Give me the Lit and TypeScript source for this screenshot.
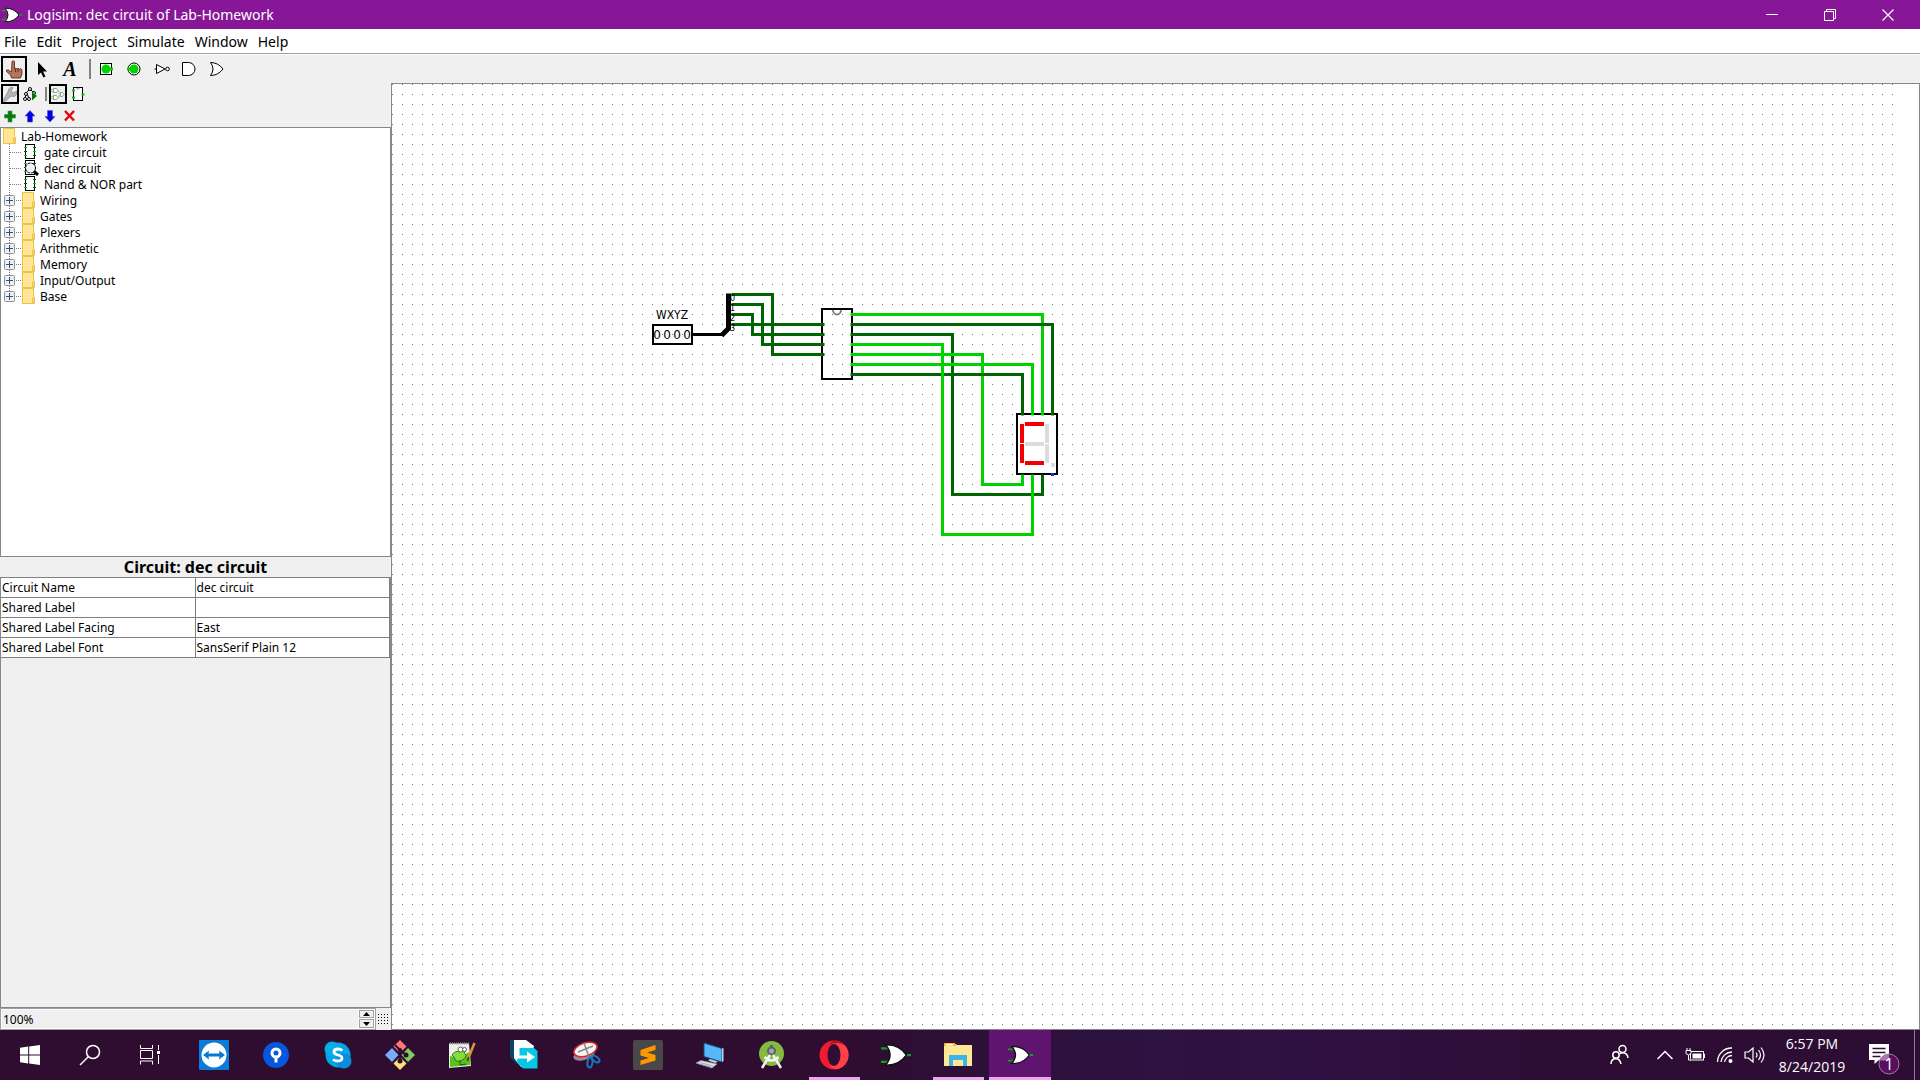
import { LitElement, html, svg, css, nothing } from "lit";
import type { TemplateResult } from "lit";
import { customElement } from "lit/decorators.js";
import { classMap } from "lit/directives/class-map.js";

const icon = (width: number, height: number, body: unknown) => html`<svg
  width=${width} height=${height} viewBox="0 0 ${width} ${height}" aria-hidden="true">${body}</svg>`;

/* ---------- toolbar icons, 24 x 24 ---------- */

const hand = icon(24, 24, svg`
  <path d="M10 4.500q1.500-1.500 2.500 0V12l1-.8 1.500.8 1-.8 1.500 1 1.500-.5 1 1.300V17l-1.500 4H9.500L8.500 18 4.500 14.500V13h2L9.500 15z" fill="#b9735a" stroke="#4a1f14" stroke-width=".8"/>
  <path d="M13.500 12v3M16 12v3" stroke="#4a1f14" stroke-width=".8" fill="none"/>`);
const arrow = icon(24, 24, svg`
  <path d="M8 5V18L11 15.500 13.500 20.500 15.500 19.500 13 14.500H17z" fill="#000"/>`);
const notGate = icon(24, 24, svg`
  <path d="M6.500 7.500V16.500L15 12z" fill="#fff" stroke="#000"/>
  <path d="M4.500 12H6" stroke="#000"/>
  <circle cx="17.500" cy="12" r="1.800" fill="#fff" stroke="#000"/>`);
const andGate = icon(24, 24, svg`
  <path d="M4.500 5.500H10.500a6.500 6.500 0 0 1 0 13H4.500z" fill="#fff" stroke="#000"/>`);
const orGate = icon(24, 24, svg`
  <path d="M4.500 5.500Q12 5.500 17 12 12 18.500 4.500 18.500 9.500 12 4.500 5.500z" fill="#fff" stroke="#000"/>`);
const inputPin = icon(24, 24, svg`
  <rect x="6.500" y="6.500" width="11" height="11" fill="#fff" stroke="#000"/>
  <circle cx="12" cy="12" r="4.500" fill="#00d200"/><path d="M15 12h4" stroke="#00d200" stroke-width="3"/>`);
const outputPin = icon(24, 24, svg`
  <circle cx="12" cy="12" r="6" fill="#fff" stroke="#000"/>
  <circle cx="12" cy="12" r="4.500" fill="#00d200"/><path d="M5 12h4" stroke="#00d200" stroke-width="3"/>`);

/* ---------- explorer icons, 16 x 16 ---------- */

const wrench = icon(16, 16, svg`
  <path d="M1 14.500 2.500 16 9 10q5 1.500 6-3l-.5-2-3 2-2.500-2 2-3.500Q6 1 6 6z" fill="#b4b4b4" stroke="#989898"/>`);
const simTree = icon(16, 16, svg`
  <g fill="#fff" stroke="#000"><path d="M8 3 4 7 3 14M8 3l5 5M5 7l2 6" fill="none"/>
  <circle cx="8" cy="3" r="1.500"/><circle cx="4" cy="8" r="1.500"/><circle cx="12" cy="7" r="1.500"/><circle cx="3" cy="13" r="1.500"/><circle cx="7" cy="13" r="1.500"/></g>
  <path d="M10 5.500v9L15 10z" fill="#087808"/>`);
const layoutView = icon(16, 16, svg`
  <g fill="#fff" stroke="#999"><path d="M3.500 2.500h3q3 2 0 4h-3zM3.500 9.500h3q3 2 0 4h-3zM10.500 6.500h2q3 2 0 4h-2z"/></g>
  <path d="M1 3.500h2M1 5.500h2M1 10.500h2M1 12.500h2M8 4.500h1v3h1M8 11.500h1V9.500h1M14 8.500h2" stroke="#86d486" fill="none"/>`);
const appearance = icon(16, 16, svg`
  <rect x="3.500" y="1.500" width="9" height="13" fill="#fff" stroke="#000"/>
  <path d="M6.500 2q1.500 3 3 0" fill="none" stroke="#888"/>
  <path d="M2 4.500h3M2 11.500h3M11.500 8.500h3" stroke="#00c800" stroke-width="2"/>`);
const plus = icon(16, 16, svg`
  <path d="M6 3h4v3.500H13.500v3.500H10V14H6v-4H2.500V6.500H6z" fill="#007c10" stroke="#3a9a42" stroke-width=".6"/>`);
const up = icon(16, 16, svg`
  <path d="M8 2.500 13 8H10.500v6h-5V8H3z" fill="#0000e0" stroke="#5555c8" stroke-width=".6"/>`);
const down = icon(16, 16, svg`
  <path d="M8 14 13 8.500H10.500v-6h-5v6H3z" fill="#0000e0" stroke="#5555c8" stroke-width=".6"/>`);
const cross = icon(16, 16, svg`
  <path d="M3 3 12 12.500M12 3 3 12.500" stroke="#e00808" stroke-width="2.500"/>`);

const folder = icon(14, 16, svg`
  <path d="M.5.5h11v9h1v6H.5z" fill="#ffe794" stroke="#e9c34d"/>
  <path d="M10.500 15V10h1.500v5" fill="#ffe794" stroke="#e9c34d"/>`);
const chip = svg`
  <rect x="3.500" y=".5" width="9" height="14" fill="#fff" stroke="#000"/>
  <path d="M2 3.500h3M2 11.500h3M11 7.500h3" stroke="#00d200"/>
  <path d="M2 7.500h3M11 3.500h3M11 11.500h3" stroke="#006400"/>`;
const circuit = icon(17, 16, chip);
const openCircuit = icon(17, 16, svg`${chip}
  <circle cx="8.500" cy="8" r="5" fill="#f0f0ff" stroke="#000" stroke-dasharray="3 1"/>
  <path d="M12 11.500 16 15" stroke="#000" stroke-width="3"/>`);

/* ---------- gate logo ---------- */

const gateLogo = (w: number, h: number) => html`<svg width=${w} height=${h} viewBox="0 0 20 16" aria-hidden="true">
  <path d="M0 3.500H5M0 12.500H5M15.500 8H20" stroke="#12a01c" stroke-width="1.500"/>
  <path d="M3 1.200Q12 .8 17 8 12 15.200 3 14.800 9 8 3 1.200z" fill="#fff" stroke="#111" stroke-width="1"/></svg>`;

/* ---------- taskbar icons, 30 x 30 ---------- */

const windowsLogo = icon(20, 20, svg`
  <path d="M0 2.800 8.200 1.600V9.500H0zM9.200 1.500 20 0v9.500H9.200zM0 10.500h8.200v8L0 17.300zM9.200 10.500H20V20L9.200 18.600z" fill="#fff"/>`);
const search = icon(22, 22, svg`
  <circle cx="14" cy="8" r="6.500" fill="none" stroke="#fff" stroke-width="1.500"/><path d="M9.500 12.500 1 21" stroke="#fff" stroke-width="1.500"/>`);
const taskView = icon(20, 20, svg`
  <path d="M.5 0v3.500h12V0M.5 19.500V16h12v3.500M.5 5.500h12v8H.5zM18.500 0v5M18.500 10v9" fill="none" stroke="#fff"/>
  <rect x="17" y="6" width="3" height="3" fill="#fff"/>`);
const teamViewer = icon(30, 30, svg`
  <rect width="30" height="30" rx="1" fill="#0b7bd8"/><circle cx="15" cy="15" r="12.500" fill="#fff"/>
  <path d="M4 15 10 10.500 9.500 13.500h11L20 10.500 26 15 20 19.500 20.500 16.500h-11L10 19.500z" fill="#0b78d0"/>`);
const sourceTree = icon(30, 30, svg`
  <circle cx="15" cy="15" r="13" fill="#0557e0"/>
  <circle cx="15" cy="13" r="4" fill="none" stroke="#fff" stroke-width="3"/><path d="M13.500 17h3v5.500h-3z" fill="#fff"/>`);
const skype = icon(30, 30, svg`
  <circle cx="15" cy="15" r="12.500" fill="#04a5e6"/><circle cx="9" cy="9" r="7.500" fill="#04ade8"/><circle cx="21" cy="21" r="7.500" fill="#088cdb"/>
  <path d="M19.500 10.500q-2-1.500-4.500-1.500-4 0-4 3 0 2 4 3t4 3q0 3-4.500 3-2.500 0-4.500-1.500" fill="none" stroke="#fff" stroke-width="2.800"/>`);
const git = icon(30, 30, svg`
  <path d="M15 0 21.500 6.500 15 13 8.500 6.500z" fill="#f87878"/><path d="M23 8 30 15 23 22 16.500 15z" fill="#80cc58"/>
  <path d="M15 17 21.500 23.500 15 30 8.500 23.500z" fill="#ffe070"/><path d="M7 8 13.500 15 7 22 0 15z" fill="#78acf8"/>
  <path d="M10 5 15 10v11M15 10l6 5" fill="none" stroke="#2e0d31" stroke-width="2"/>
  <circle cx="15" cy="10" r="2" fill="#2e0d31"/><circle cx="15" cy="21" r="2.500" fill="#2e0d31"/><circle cx="21" cy="15" r="2.500" fill="#2e0d31"/>`);
const notepad = icon(30, 30, svg`
  <path d="M2 3.500H22L24 26 2 28z" fill="#eef2ea"/><path d="M3 16q10 2 19-4l1.500 13L3 27z" fill="#55c41c"/>
  <path d="M3 3.500H22" stroke="#999" stroke-width="2" stroke-dasharray="1 1"/>
  <path d="M5 15q3-5 8-3 1-4 4-3t0 4q4 2 0 6-6 4-9 1 0-3-3-5z" fill="#83dd3a" stroke="#28501c" stroke-width=".8"/>
  <circle cx="13.500" cy="9.500" r="2.500" fill="#fff" stroke="#444" stroke-width=".8"/><circle cx="17.500" cy="9.500" r="2" fill="#fff" stroke="#444" stroke-width=".8"/>
  <path d="M13 21v4l6-1" fill="none" stroke="#28501c"/>
  <path d="M27.500 3 21 19" stroke="#e0962a" stroke-width="2.500"/><path d="M21.500 17 20.500 21" stroke="#553311" stroke-width="1.500"/>`);
const transfer = icon(30, 30, svg`
  <path d="M1 0H16L12 26 8 24 1 17z" fill="#0b4568"/><path d="M5 0H17L25 6 20 27H12L5 18z" fill="#fff"/>
  <path d="M10 8H25L28.500 11V28.500H14L8 22z" fill="#04c8e4"/><path d="M5 8V18H8V8z" fill="#fff"/>
  <path d="M9 8v9h11" fill="none" stroke="#fff" stroke-width="3"/><path d="M18 11.500 26 17 18 22.500z" fill="#fff"/>`);
const snip = icon(30, 30, svg`
  <ellipse cx="13" cy="15" rx="11" ry="5" transform="rotate(-16 13 15)" fill="#9a8a9c"/>
  <ellipse cx="14.500" cy="9.500" rx="12" ry="6.500" transform="rotate(-18 14.500 9.500)" fill="#f4f4f4" stroke="#d82830" stroke-width="1.500"/>
  <path d="M7 12 22 6M13 3 18 17" stroke="#888" stroke-width="1.500"/>
  <ellipse cx="19" cy="22.500" rx="2.500" ry="5" transform="rotate(8 19 22.500)" fill="none" stroke="#1878c4" stroke-width="2"/>
  <ellipse cx="24.500" cy="19" rx="2.500" ry="4.500" transform="rotate(-55 24.500 19)" fill="none" stroke="#1878c4" stroke-width="2"/>`);
const sublime = icon(30, 30, svg`
  <rect width="30" height="30" rx="2" fill="#484848"/>
  <path d="M22.500 5 7.500 10v5.500L16 18l-8.500 2.500V25l15-4.500V15L14 12.500 22.500 10z" fill="#ff9800"/>`);
const computer = icon(30, 30, svg`
  <path d="M9 3 27 8.500V22L9 16.500z" fill="#55b8fa" stroke="#1b4f83"/>
  <path d="M27 8.500V22l1.500-1V8z" fill="#c8d4dc"/>
  <path d="M6 20.500 22 24 17 28 1 23z" fill="#dfe3e8" stroke="#8893a0" stroke-width=".7"/><path d="M5 22.500 18 26M4 24 16 27" stroke="#8893a0" stroke-width=".7"/>
  <path d="M15 19 23 21.500 20 23 13 20.500z" fill="#c4ccd4"/>`);
const androidStudio = icon(30, 30, svg`
  <circle cx="14.500" cy="13.500" r="12.500" fill="#85ba3f"/>
  <circle cx="14.500" cy="11" r="3.500" fill="#a0a8a8" stroke="#5d6366" stroke-width="2"/><path d="M14.500 5v3" stroke="#5d6366" stroke-width="3"/>
  <path d="M13 15 5 28M16 15 24 28" stroke="#f4f4f4" stroke-width="2.500"/><path d="M7.500 17q7 7 14 0" fill="none" stroke="#f4f4f4" stroke-width="2.500"/>`);
const opera = icon(30, 30, svg`
  <ellipse cx="15" cy="15" rx="14.500" ry="14.500" fill="#ee1c2e"/><path d="M18 .8a14.500 14.500 0 0 1 0 28.400Q12 29 10 25q10 3 11-10Q20 2 10 5 13 1 18 .8z" fill="#ff4048"/>
  <path d="M10 5q2-4 8-4.200 5 1 8 5-6-5-16-.8z" fill="#b80d20"/>
  <ellipse cx="15" cy="15" rx="6.500" ry="11" fill="#300d34"/>`);
const explorer = icon(30, 26, svg`
  <path d="M1 1h10l3 2h15v21H1z" fill="#ffe793"/><path d="M1 1h10l2.500 3H1z" fill="#f5b52c"/><path d="M3 2h7v1.500H3z" fill="#fff"/>
  <path d="M6 24V13h18v11h-4v-6H10v6z" fill="#3db4e7"/>`);

/* ---------- tray icons ---------- */

const people = icon(20, 22, svg`
  <g fill="none" stroke="#fff" stroke-width="1.500"><circle cx="12.500" cy="5" r="3.500"/><circle cx="6" cy="11" r="3.200"/>
  <path d="M1 20q0-5 5-5.500 4 .5 5 5.500M9.500 10q2-1.500 4-1.200 4 .7 4.500 5.200"/></g>`);
const chevron = icon(18, 10, svg`<path d="M1.500 9 9 1.500 16.500 9" fill="none" stroke="#fff" stroke-width="1.500"/>`);
const battery = icon(20, 16, svg`
  <rect x="5.500" y="4.500" width="13" height="8.500" fill="none" stroke="#fff"/><path d="M18.500 7h1v4" stroke="#fff" fill="none"/>
  <path d="M7.500 6.500h9v5h-9z" fill="#fff"/><path d="M1 3.500h5v3L3.500 8 1 6.500zM3.500 8v5H6M2 1v3M5 1v3" stroke="#fff" fill="#2e0d31"/>`);
const wifi = icon(18, 18, svg`
  <g fill="none" stroke="#fff" stroke-width="1.300"><path d="M1.500 16A14 14 0 0 1 16 2M5 16A11 11 0 0 1 16 6M8.500 16A8 8 0 0 1 16 9.500"/></g>
  <circle cx="14.500" cy="15" r="2" fill="#fff"/>`);
const speaker = icon(22, 18, svg`
  <g fill="none" stroke="#fff" stroke-width="1.200"><path d="M1 6h3.500L9 2V16L4.500 12H1zM12 6.500q2 2.500 0 5M14.500 4q4 5 0 10M17 1.500q6 7.500 0 15"/></g>`);
const notification = icon(32, 40, svg`
  <path d="M0 9H20V25H10l-4.500 4V25H0z" fill="#fff"/><path d="M3.500 13.500h13M3.500 17.500h13M3.500 21.500h8" stroke="#2e0d31" stroke-width="1.500"/>
  <circle cx="20" cy="29" r="10" fill="#56105f" stroke="#a678ac"/>
  <path d="M10.500 25.500A10 10 0 0 1 20 19.500v6z" fill="#a678ac"/>`);

/* ---------- data ---------- */

type Node = { label: string; kind: "circuit" | "open" | "folder" };
const nodes: Node[] = [
  { label: "gate circuit", kind: "circuit" },
  { label: "dec circuit", kind: "open" },
  { label: "Nand & NOR part", kind: "circuit" },
  ...["Wiring", "Gates", "Plexers", "Arithmetic", "Memory", "Input/Output", "Base"].map(
    (label): Node => ({ label, kind: "folder" })),
];

const attributes: [string, string][] = [
  ["Circuit Name", "dec circuit"],
  ["Shared Label", ""],
  ["Shared Label Facing", "East"],
  ["Shared Label Font", "SansSerif Plain 12"],
];

type Tool = { name: string; icon: TemplateResult; selected?: boolean };

const pinned: { name: string; icon: TemplateResult; state?: string }[] = [
  { name: "TeamViewer", icon: teamViewer },
  { name: "Sourcetree", icon: sourceTree },
  { name: "Skype", icon: skype },
  { name: "Git Bash", icon: git },
  { name: "Notepad++", icon: notepad },
  { name: "File transfer", icon: transfer },
  { name: "Snipping Tool", icon: snip },
  { name: "Sublime Text", icon: sublime },
  { name: "Remote computer", icon: computer },
  { name: "Android Studio", icon: androidStudio },
  { name: "Opera", icon: opera, state: "running" },
  { name: "Logisim shortcut", icon: gateLogo(30, 24) },
  { name: "File Explorer", icon: explorer, state: "running" },
  { name: "Logisim", icon: gateLogo(25, 20), state: "active" },
];

/* Wires on the 10-unit grid; value 1 is bright green, 0 is dark green. */
const wires: { path: string; value: 0 | 1 }[] = [
  { path: "M731 294H772V354H824", value: 0 },
  { path: "M731 304H762V344H824", value: 0 },
  { path: "M731 314H752V334H824", value: 0 },
  { path: "M731 324H824", value: 0 },
  { path: "M850 334H952V494H1042V474", value: 0 },
  { path: "M850 354H982V484H1022V474", value: 1 },
  { path: "M850 364H1032V415", value: 1 },
  { path: "M850 374H1022V415", value: 0 },
  { path: "M850 344H942V534H1032V474", value: 1 },
  { path: "M850 314H1042V415", value: 1 },
  { path: "M850 324H1052V415", value: 0 },
];

const segments: [number, number, number, number, boolean][] = [
  [1025, 422, 19, 4, true],
  [1020, 424, 4, 19, true],
  [1020, 444, 4, 19, true],
  [1025, 461, 19, 4, true],
  [1025, 442, 19, 4, false],
  [1045, 424, 4, 19, false],
  [1045, 444, 4, 19, false],
  [1051, 463, 4, 4, false],
];

@customElement("circuit-canvas")
export class CircuitCanvas extends LitElement {
  static styles = css`
    :host { display: block; position: relative; overflow: hidden; background: #fff; }
    .grid {
      height: 100%;
      margin-right: 25px;
      background: conic-gradient(at 1px 1px, transparent 75%, #777 0) 0 0 / 10px 10px;
    }
    .drawing { position: absolute; left: 0; top: 0; }
    .label { font: 12px "DejaVu Sans Condensed", "Noto Sans", sans-serif; }
    .bit { font: 12px "DejaVu Sans", sans-serif; text-anchor: middle; }
    .fan { font: 8px "DejaVu Sans", sans-serif; }
  `;
  render() {
    return html`
      <div class="grid"></div>
      <svg class="drawing" width="700" height="480" viewBox="392 84 700 480" role="img" aria-label="dec circuit">
        <rect x="653" y="325" width="39" height="19" fill="none" stroke="#000" stroke-width="2" />
        <text class="label" x="656" y="319">WXYZ</text>
        ${[657, 667, 677, 687].map((x) => svg`<text class="bit" x=${x} y="339">0</text>`)}
        <rect x="822" y="309" width="30" height="70" fill="none" stroke="#000" stroke-width="2" />
        <path d="M833 310a4 4.500 0 0 0 8 0" fill="none" stroke="#808080" stroke-width="2" />
        <rect x="1017" y="414" width="40" height="60" fill="#fff" stroke="#000" stroke-width="2" />
        <g transform="translate(.5 .5)" fill="none" stroke-width="3">
          ${wires.map((w) => svg`<path d=${w.path} stroke=${w.value ? "#00d200" : "#006400"} />`)}
          <path d="M692 334H722" stroke="#000" />
          <path d="M721 335 728 328V293" stroke="#000" stroke-width="5" />
        </g>
        ${[0, 1, 2, 3].map((n) => svg`<text class="fan" x="730" y=${301 + n * 10}>${n}</text>`)}
        ${segments.map(([x, y, w, h, lit]) => svg`<rect x=${x} y=${y} width=${w} height=${h}
          fill=${lit ? "#f00000" : "#dcdcdc"} />`)}
        <rect x="1051" y="473" width="3" height="3" fill="#2020ff" />
      </svg>
    `;
  }
}

@customElement("app-root")
export class AppRoot extends LitElement {
  static styles = css`
    :host {
      display: flex;
      flex-direction: column;
      min-height: 100vh;
      background: #f0f0f0;
      color: #000;
      font: 12px/16px "Noto Sans", sans-serif;
    }
    *, *::before { box-sizing: border-box; }
    svg { display: block; flex: none; }
    button {
      display: flex;
      align-items: center;
      justify-content: center;
      margin: 0;
      padding: 0;
      border: 0;
      background: none;
      color: inherit;
      font: inherit;
    }
    ul { margin: 0; padding: 0; list-style: none; }

    .titlebar {
      display: flex;
      align-items: center;
      height: 29px;
      padding: 0 3px 0 2px;
      background: #881798;
      color: #fff;
      font: 14px/20px "Noto Sans", sans-serif;
    }
    .title { flex: 1; margin: 0; padding-left: 5px; font: inherit; }
    .window-button { width: 58px; height: 29px; }

    .menubar {
      display: flex;
      gap: 10px;
      height: 26px;
      padding: 0 4px;
      border-bottom: 1px solid #fff;
      background: linear-gradient(#a0a0a0 0 0) bottom / 100% 1px no-repeat, #fff;
      font: 14px/20px "Noto Sans", sans-serif;
    }

    .toolbar { display: flex; height: 28px; }
    .tool { width: 28px; height: 28px; }
    .small .tool { width: 20px; height: 20px; }
    .selected { position: relative; }
    .selected::before {
      content: "";
      position: absolute;
      inset: 1px;
      border: 2px solid #000;
    }
    .small .selected::before { inset: 0 1px; }
    .text-tool { font: italic bold 20px/24px "Liberation Serif", serif; }
    .separator { width: 2px; height: 20px; margin: 4px 1px 4px 5px; background: #808080; }
    .small .separator { height: 14px; margin: 3px 1px 3px 5px; }
    .small { display: flex; height: 20px; }
    .edit { height: 23px; padding-top: 2px; }

    .main { flex: 1; display: grid; grid-template-columns: 391px 1fr; }
    .side { display: flex; flex-direction: column; padding-top: 1px; min-width: 0; }
    .canvas { border: 1px solid #828790; }

    .tree {
      flex: 429 1 0;
      border: 1px solid #828790;
      background: #fff;
    }
    .node { display: flex; height: 16px; line-height: 18px; white-space: nowrap; }
    .root { padding-left: 2px; gap: 4px; }
    .leaf { gap: 4px; }
    .circuit { gap: 5px; }
    .properties { flex: 452 1 0; display: flex; flex-direction: column; }
    .heading {
      margin: 0;
      height: 20px;
      font-size: 16px;
      line-height: 20px;
      text-align: center;
      font-weight: bold;
    }
    .pane { flex: 1; border: 1px solid #828790; border-top-color: #808080; }
    .attributes { width: 100%; border-spacing: 0; table-layout: fixed; }
    .attributes th, .attributes td {
      height: 20px;
      padding: 0 1px;
      border: solid #808080;
      border-width: 0 1px 1px 0;
      background: #fff;
      font-weight: normal;
      text-align: left;
      line-height: 18px;
    }

    .zoom { display: flex; height: 22px; }
    .spinner {
      flex: 1;
      display: flex;
      min-width: 0;
      border: 1px solid #a0a0a8;
      background: #f0f0f0;
      box-shadow: inset 0 0 0 1px #fff;
    }
    .spinner input {
      flex: 1;
      min-width: 0;
      padding: 1px 2px 0;
      border: 0;
      background: none;
      font: inherit;
    }
    .steps { display: flex; flex-direction: column; gap: 1px; padding: 1px 1px; background: #fff; }
    .step { width: 15px; height: 9px; border: 1px solid #a0a0a0; background: #f0f0f0; }
    .steps .step:first-child { height: 8px; }
    .grid-toggle { width: 15px; }

    .taskbar {
      display: flex;
      height: 50px;
      background: linear-gradient(90deg, #2e0d31 0 45%, #2d1240 58%, #2f1042 68%, #2e0d35 80%);
      color: #fff;
      font: 15px/23px "Open Sans", "Noto Sans", sans-serif;
    }
    .system { width: 60px; height: 50px; }
    .pinned { display: flex; flex: 1; padding-left: 3px; }
    .app { position: relative; width: 62px; height: 50px; }
    .active { background: #5f1470; }
    .running::before, .active::before {
      content: "";
      position: absolute;
      inset: auto 0 0;
      height: 3px;
      background: #eda5ee;
    }
    .running::before { inset: auto 5px 0 6px; }
    .tray { display: flex; }
    .tray-button { width: 30px; height: 50px; }
    .people { width: 40px; margin-right: 10px; }
    .clock {
      width: 84px;
      display: flex;
      flex-direction: column;
      align-items: center;
      justify-content: center;
      font-size: 14px;
    }
    .notifications { position: relative; width: 60px; padding: 0 0 0 2px; }
    .count { position: absolute; left: 25px; top: 23px; width: 20px; text-align: center; font-size: 16px; }
    .desktop { width: 6px; border-left: 1px solid #8f7b93; }
  `;

  private tool(t: Tool) {
    return html`<button class=${classMap({ tool: true, selected: !!t.selected })} title=${t.name}
      aria-label=${t.name} aria-pressed=${t.selected ? "true" : "false"}>${t.icon}</button>`;
  }

  private guide(node: Node, last: boolean) {
    const expandable = node.kind === "folder";
    return html`<svg width="21" height="16" viewBox="0 0 21 16" aria-hidden="true">
      <path d="M8.500 0V${last ? 8 : 16}M9 8.500H20" stroke="#808080" stroke-dasharray="1 1" fill="none" />
      ${expandable
        ? svg`<rect x="3.500" y="3.500" width="10" height="10" rx="1" fill="#f0f0f0" stroke="#919191" />
            <path d="M5 8.500H12M8.500 5V12" stroke="#2c4f9e" />`
        : nothing}
    </svg>`;
  }

  render() {
    const steps = (d: string) => icon(7, 4, svg`<path d=${d} fill="#000" />`);
    return html`
      <header class="titlebar">
        ${gateLogo(20, 16)}
        <h1 class="title">Logisim: dec circuit of Lab-Homework</h1>
        <button class="window-button" aria-label="Minimize">${icon(12, 12, svg`<path d="M0 5.500H12" stroke="#fff"/>`)}</button>
        <button class="window-button" aria-label="Restore">${icon(12, 12, svg`
          <path d="M.5 2.500h9v9h-9zM2.500 2.500V.5h9v9h-2" fill="none" stroke="#fff"/>`)}</button>
        <button class="window-button" aria-label="Close">${icon(12, 12, svg`<path d="M.5.5l11 11M11.500.5l-11 11" stroke="#fff" stroke-width="1.200"/>`)}</button>
      </header>

      <nav class="menubar" aria-label="Menu">
        ${["File", "Edit", "Project", "Simulate", "Window", "Help"].map((m) => html`<button>${m}</button>`)}
      </nav>

      <div class="toolbar" role="toolbar" aria-label="Tools">
        ${this.tool({ name: "Poke", icon: hand, selected: true })}
        ${this.tool({ name: "Select", icon: arrow })}
        ${this.tool({ name: "Text", icon: html`<span class="text-tool">A</span>` })}
        <span class="separator"></span>
        ${this.tool({ name: "Input pin", icon: inputPin })}
        ${this.tool({ name: "Output pin", icon: outputPin })}
        ${this.tool({ name: "NOT gate", icon: notGate })}
        ${this.tool({ name: "AND gate", icon: andGate })}
        ${this.tool({ name: "OR gate", icon: orGate })}
      </div>

      <main class="main">
        <aside class="side">
          <div class="small" role="toolbar" aria-label="Views">
            ${this.tool({ name: "Toolbox", icon: wrench, selected: true })}
            ${this.tool({ name: "Simulation tree", icon: simTree })}
            <span class="separator"></span>
            ${this.tool({ name: "Edit layout", icon: layoutView, selected: true })}
            ${this.tool({ name: "Edit appearance", icon: appearance })}
          </div>
          <div class="small edit" role="toolbar" aria-label="Circuits">
            ${this.tool({ name: "Add circuit", icon: plus })}
            ${this.tool({ name: "Move up", icon: up })}
            ${this.tool({ name: "Move down", icon: down })}
            ${this.tool({ name: "Remove circuit", icon: cross })}
          </div>

          <div class="tree">
            <div class="node root">${folder}<span>Lab-Homework</span></div>
            <ul>
              ${nodes.map((n, i) => html`<li class="node ${n.kind === "folder" ? "leaf" : "circuit"}">
                <span class="node">${this.guide(n, i === nodes.length - 1)}${n.kind === "folder"
                  ? folder : n.kind === "open" ? openCircuit : circuit}</span>
                <span>${n.label}</span>
              </li>`)}
            </ul>
          </div>

          <section class="properties">
            <h2 class="heading">Circuit: dec circuit</h2>
            <div class="pane">
              <table class="attributes">
                <tbody>
                  ${attributes.map(([k, v]) => html`<tr><th scope="row">${k}</th><td>${v}</td></tr>`)}
                </tbody>
              </table>
            </div>
          </section>

          <div class="zoom">
            <div class="spinner">
              <input type="text" aria-label="Zoom" .value=${"100%"} />
              <div class="steps">
                <button class="step" aria-label="Zoom in">${steps("M0 4 3.500 0 7 4z")}</button>
                <button class="step" aria-label="Zoom out">${steps("M0 0 3.500 4 7 0z")}</button>
              </div>
            </div>
            <button class="grid-toggle" aria-label="Toggle grid">${icon(11, 11, svg`
              <path d="M0 .5H11M0 3.500H11M0 6.500H11M0 9.500H11" stroke="#000" stroke-dasharray="1 2"/>`)}</button>
          </div>
        </aside>
        <circuit-canvas class="canvas"></circuit-canvas>
      </main>

      <footer class="taskbar">
        <button class="system" aria-label="Start">${windowsLogo}</button>
        <button class="system" aria-label="Search">${search}</button>
        <button class="system" aria-label="Task view">${taskView}</button>
        <div class="pinned">
          ${pinned.map((p) => html`<button class="app ${p.state ?? ""}" aria-label=${p.name}>${p.icon}</button>`)}
        </div>
        <div class="tray">
          <button class="tray-button people" aria-label="People">${people}</button>
          <button class="tray-button" aria-label="Show hidden icons">${chevron}</button>
          <button class="tray-button" aria-label="Battery">${battery}</button>
          <button class="tray-button" aria-label="Network">${wifi}</button>
          <button class="tray-button" aria-label="Volume">${speaker}</button>
          <button class="clock"><span>6:57 PM</span><span>8/24/2019</span></button>
          <button class="notifications" aria-label="Notifications">${notification}<span class="count">1</span></button>
          <button class="desktop" aria-label="Show desktop"></button>
        </div>
      </footer>
    `;
  }
}
